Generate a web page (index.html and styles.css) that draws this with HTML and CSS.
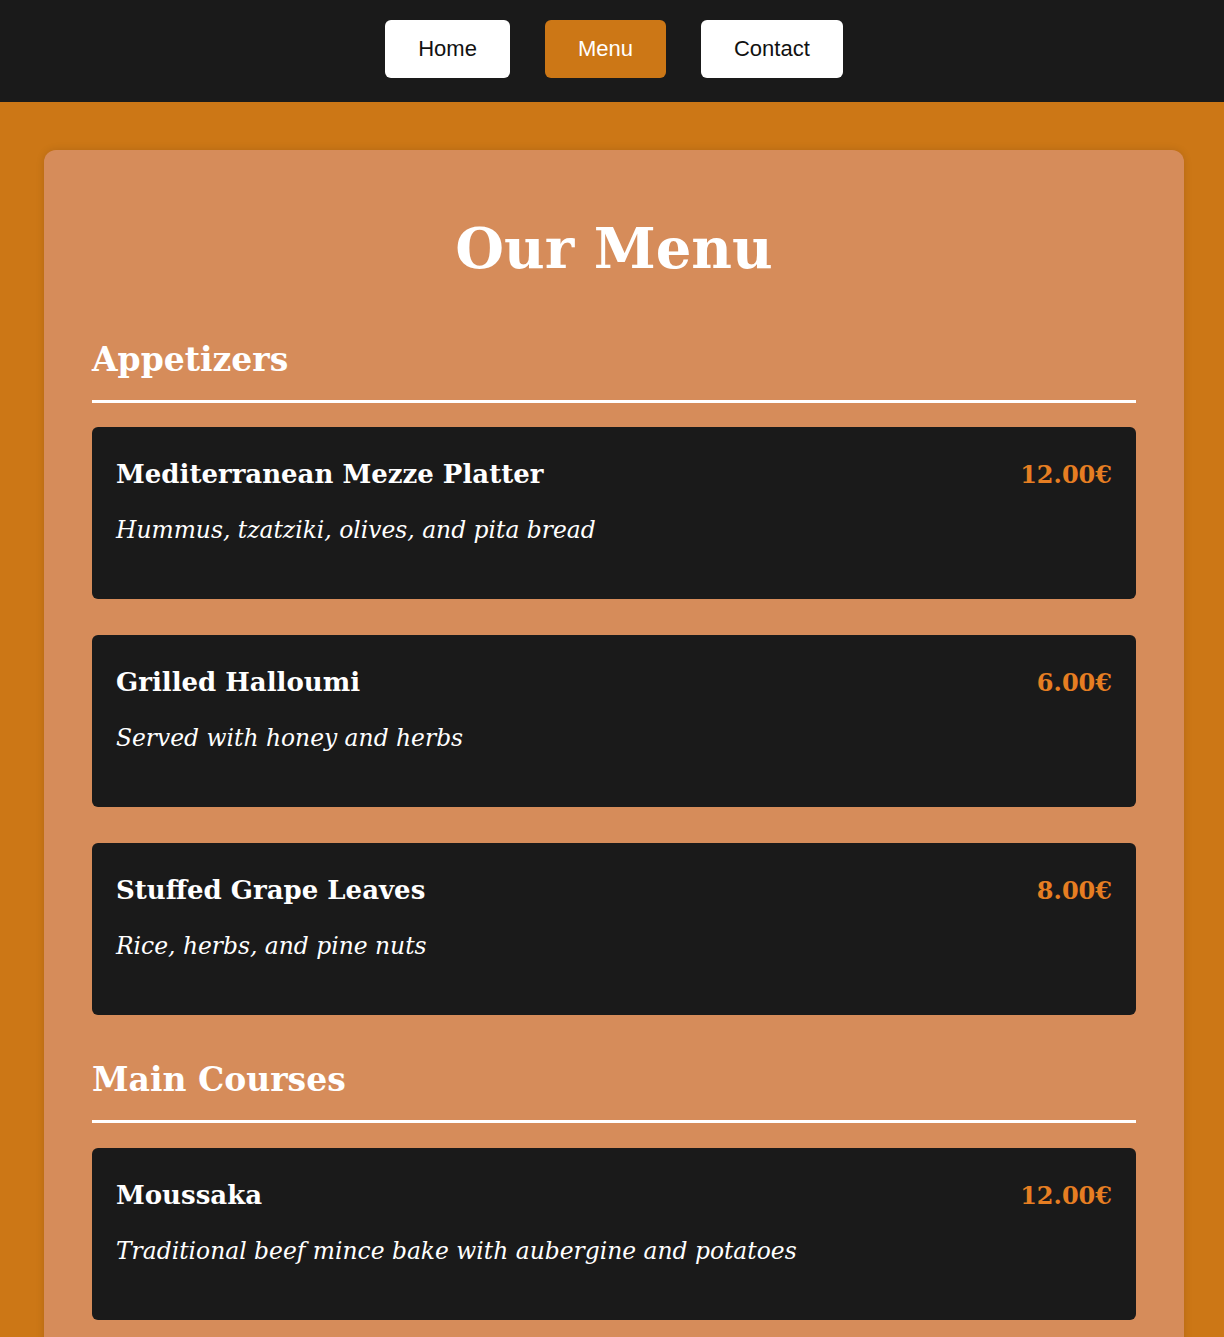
FILE: index.html
```html
<!DOCTYPE html>
<html lang="en">
<head>
<meta charset="utf-8">
<title>Our Menu</title>
<link rel="stylesheet" href="styles.css">
</head>
<body>
<nav class="nav">
  <a class="nav-btn" href="#">Home</a>
  <a class="nav-btn active" href="#">Menu</a>
  <a class="nav-btn" href="#">Contact</a>
</nav>
<main class="card">
  <h1 class="title">Our Menu</h1>
  <section class="section">
    <h2 class="section-title">Appetizers</h2>
    <div class="item">
      <div class="item-head"><h3 class="item-name">Mediterranean Mezze Platter</h3><span class="price">12.00€</span></div>
      <p class="item-desc">Hummus, tzatziki, olives, and pita bread</p>
    </div>
    <div class="item">
      <div class="item-head"><h3 class="item-name">Grilled Halloumi</h3><span class="price">6.00€</span></div>
      <p class="item-desc">Served with honey and herbs</p>
    </div>
    <div class="item">
      <div class="item-head"><h3 class="item-name">Stuffed Grape Leaves</h3><span class="price">8.00€</span></div>
      <p class="item-desc">Rice, herbs, and pine nuts</p>
    </div>
  </section>
  <section class="section">
    <h2 class="section-title">Main Courses</h2>
    <div class="item">
      <div class="item-head"><h3 class="item-name">Moussaka</h3><span class="price">12.00€</span></div>
      <p class="item-desc">Traditional beef mince bake with aubergine and potatoes</p>
    </div>
  </section>
</main>
</body>
</html>
```
FILE: styles.css
```css
html, body {
  margin: 0;
  padding: 0;
}
body {
  background: #cc7716;
  font-family: "DejaVu Serif", Georgia, serif;
  color: #ffffff;
}
.nav {
  background: #1a1a1a;
  display: flex;
  justify-content: center;
  gap: 35px;
  padding: 20px 0 24px 4px;
}
.nav-btn {
  display: block;
  font-family: "Liberation Sans", Arial, sans-serif;
  font-size: 22px;
  line-height: 26px;
  padding: 16px 33px;
  background: #ffffff;
  color: #111111;
  text-decoration: none;
  border-radius: 6px;
}
.nav-btn.active {
  background: #cc7716;
  color: #ffffff;
}
.card {
  width: 1140px;
  box-sizing: border-box;
  margin: 48px 0 0 44px;
  padding: 48px 48px 40px;
  background: #d68c5a;
  border-radius: 12px;
  box-shadow: 0 0 8px rgba(0, 0, 0, 0.12);
}
.title {
  margin: 10px 0 0;
  text-align: center;
  font-size: 56px;
  line-height: 80px;
  font-weight: bold;
}
.section-title {
  margin: 52px 0 24px;
  font-size: 33px;
  line-height: 40px;
  padding-bottom: 20px;
  border-bottom: 3px solid #ffffff;
}
.section + .section .section-title {
  margin-top: 45px;
  margin-bottom: 25px;
}
.item {
  background: #1a1a1a;
  border-radius: 6px;
  padding: 29px 24px 53px;
  margin-bottom: 36px;
}
.item-head {
  display: flex;
  justify-content: space-between;
  align-items: baseline;
}
.item-name {
  margin: 0;
  font-size: 26px;
  line-height: 36px;
  font-weight: bold;
}
.price {
  color: #e67e22;
  font-size: 24px;
  font-weight: bold;
}
.item-desc {
  margin: 22px 0 0;
  font-size: 23.4px;
  line-height: 32px;
  font-style: italic;
}
```
